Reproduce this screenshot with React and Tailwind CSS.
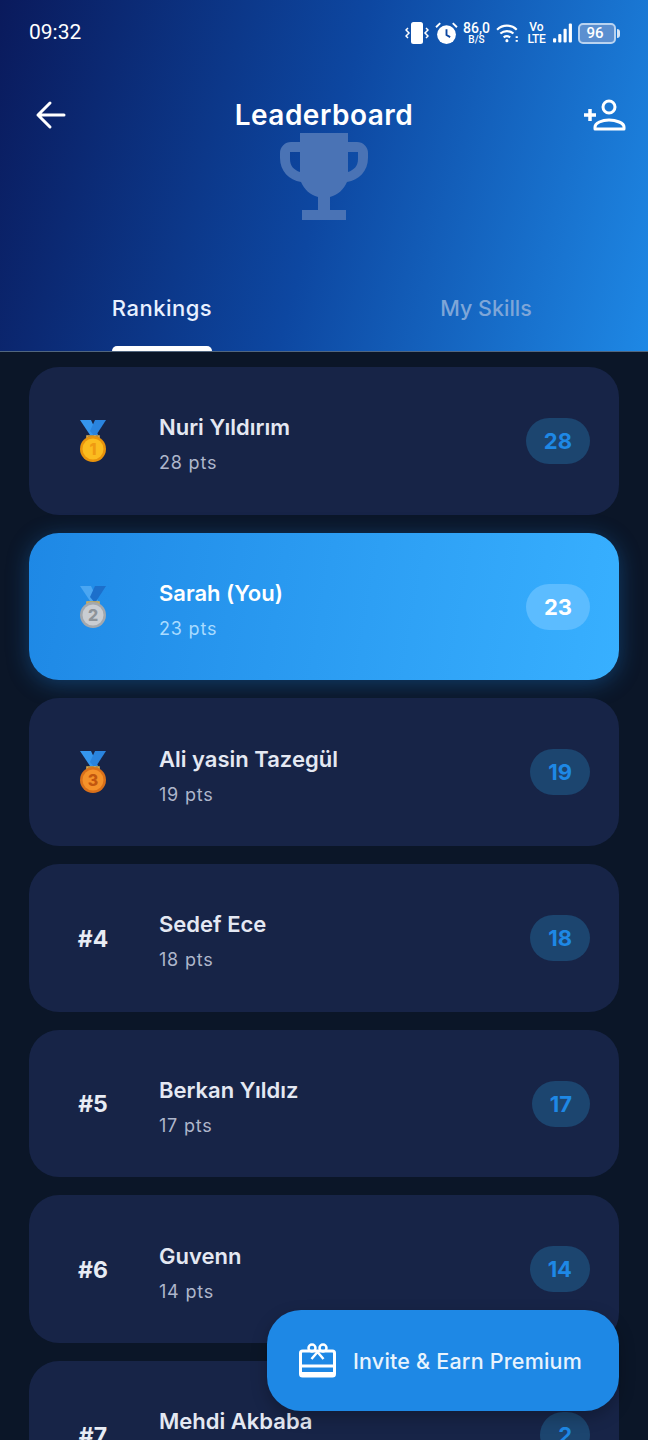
const HEADING = 'font-["Inter",sans-serif]'

const players = [
  { rank: 1, name: 'Nuri Yıldırım', points: 28 },
  { rank: 2, name: 'Sarah (You)', points: 23, isMe: true },
  { rank: 3, name: 'Ali yasin Tazegül', points: 19 },
  { rank: 4, name: 'Sedef Ece', points: 18 },
  { rank: 5, name: 'Berkan Yıldız', points: 17 },
  { rank: 6, name: 'Guvenn', points: 14 },
  { rank: 7, name: 'Mehdi Akbaba', points: 2 }
]

const medals = {
  1: { disk: '#fbbc1f', edge: '#e8930c', mark: '#ef9a12', left: '#3596ee', right: '#2a84de' },
  2: { disk: '#c9cdd2', edge: '#a3a8ae', mark: '#8d9399', left: '#4aa6f2', right: '#1c6fcb' },
  3: { disk: '#f5922a', edge: '#d9701a', mark: '#c2560f', left: '#3596ee', right: '#2a84de' }
}

function Medal({ rank }) {
  const m = medals[rank]
  return (
    <svg width="28" height="44" viewBox="0 0 28 44">
      <path d="M1 1h11l7 15h-8z" fill={m.left} />
      <path d="M27 1h-11l-5 11 5 6z" fill={m.right} />
      <path d="M8 17h12v3l-2 2h-8l-2-2z" fill="none" stroke="#e2b04a" strokeWidth="1.5" />
      <circle cx="14" cy="30" r="13" fill={m.edge} />
      <circle cx="14" cy="30" r="10.5" fill={m.disk} />
      <text x="14" y="36" textAnchor="middle" fontSize="16" fontWeight="800" fontFamily="Inter, sans-serif" fill={m.mark}>
        {rank}
      </text>
    </svg>
  )
}

function PlayerCard({ player }) {
  const { rank, name, points, isMe } = player
  return (
    <div
      className={`flex h-[147.7px] shrink-0 items-center rounded-[30px] pr-[29px] pl-[32px] ${
        isMe
          ? 'bg-[linear-gradient(100deg,#1e88e5,#38b0ff)] shadow-[0_4px_22px_rgba(30,136,229,0.35)]'
          : 'bg-[#172447]'
      }`}
    >
      <div className="flex w-[64px] shrink-0 items-center justify-center">
        {rank <= 3 ? (
          <Medal rank={rank} />
        ) : (
          <span className="pt-[2px] font-['Inter',sans-serif] text-[23px] font-bold text-[#e8ecf4]">#{rank}</span>
        )}
      </div>
      <div className="mt-[7px] ml-[34px] min-w-0 flex-1">
        <div className={`${HEADING} text-[22px] leading-[30px] font-semibold ${isMe ? 'text-white' : 'text-[#e4e8f2]'}`}>
          {name}
        </div>
        <div className={`mt-[8px] font-['Inter',sans-serif] text-[18px] leading-[26px] tracking-[0.8px] ${isMe ? 'text-[#a9dbff]' : 'text-[#aeb6cb]'}`}>
          {points} pts
        </div>
      </div>
      <div
        className={`flex h-[46px] items-center rounded-full px-[18px] pt-[1px] font-['Inter',sans-serif] text-[22px] font-bold ${
          isMe ? 'bg-[#5cbcff] text-white' : 'bg-[#1c456f] text-[#1e88e5]'
        }`}
      >
        {points}
      </div>
    </div>
  )
}

function StatusBar() {
  return (
    <div className="flex h-[66px] items-center justify-between pr-[28px] pl-[29px]">
      <span className="font-['Roboto',sans-serif] text-[21px] text-white">09:32</span>
      <div className="flex items-center text-white">
        <svg width="24" height="24" viewBox="0 0 24 24" fill="none" stroke="white" strokeWidth="1.5">
          <rect x="6" y="1" width="12" height="22" rx="2.5" fill="white" stroke="none" />
          <path d="M3 7l-2 2 3 3-3 3 2 2M21 7l2 2-3 3 3 3-2 2" />
        </svg>
        <svg className="ml-[6px]" width="23" height="23" viewBox="0 0 22 22">
          <circle cx="11" cy="12" r="9" fill="white" />
          <path d="M11 7v5.5l3.5 2" fill="none" stroke="#0d47a1" strokeWidth="1.8" />
          <path d="M1 5l4-4M21 5l-4-4" stroke="white" strokeWidth="1.8" />
        </svg>
        <div className="ml-[5px] flex w-[27px] flex-col items-center font-['Roboto',sans-serif] font-medium">
          <span className="text-[14px] leading-[14px]">86,0</span>
          <span className="text-[10px] leading-[10px]">B/S</span>
        </div>
        <svg className="ml-[6px]" width="24" height="20" viewBox="0 0 22 18" fill="none" stroke="white" strokeWidth="2">
          <path d="M1 6c5-5 13-5 18 0M4 9.5c3.500-3 8.500-3 12 0M7 13c2-1.500 4-1.500 6 0" />
          <circle cx="10" cy="16" r="1.400" fill="white" stroke="none" />
          <path d="M19 12v1.500M19 15.500v1.500" />
        </svg>
        <div className="ml-[6px] flex w-[21px] flex-col items-center font-['Roboto',sans-serif] font-medium">
          <span className="text-[12px] leading-[12px]">Vo</span>
          <span className="text-[12px] leading-[12px] tracking-[-0.3px]">LTE</span>
        </div>
        <svg className="ml-[6px]" width="20" height="22" viewBox="0 0 19 20" fill="white">
          <rect x="0" y="15" width="3" height="4" rx="1" />
          <rect x="5" y="11" width="3" height="8" rx="1" />
          <rect x="10" y="6" width="3" height="13" rx="1" />
          <rect x="15" y="1" width="3" height="18" rx="1" />
        </svg>
        <div className="ml-[5px] flex h-[21px] w-[38px] items-center justify-center rounded-[5px] border-2 border-[#b9d3f0] bg-[#5b8fd0] pr-[4px] font-['Roboto',sans-serif] text-[15px] leading-none font-medium text-white">
          96
        </div>
        <div className="ml-[1px] h-[9px] w-[3px] rounded-r-sm bg-[#d5e4f5]" />
      </div>
    </div>
  )
}

function Header() {
  return (
    <div className="relative h-[352px] shrink-0 border-b border-b-[#51667f] bg-[linear-gradient(105deg,#0a1a5c_0%,#0d47a1_50%,#1e88e5_100%)]">
      <StatusBar />
      <svg className="absolute top-[133px] left-[280px]" width="88" height="87" viewBox="0 0 88 87" fill="#4a73b5">
        <path d="M20 0h48v9h9a11 11 0 0 1 11 11v5c0 13-9 22-21 24-3 7-9 13-17 15v13h16v10H22V77h16V64c-8-2-14-8-17-15C9 47 0 38 0 25v-5A11 11 0 0 1 11 9h9zM10 19v7c0 7 4 11 10 13V19zM68 19v20c6-2 10-6 10-13v-7z" fillRule="evenodd" />
      </svg>
      <div className="relative mt-[18px] flex h-[62px] items-center justify-between pr-[22px] pl-[35px]">
        <svg width="32" height="32" viewBox="0 0 32 32" fill="none" stroke="white" strokeWidth="3" strokeLinecap="round" strokeLinejoin="round">
          <path d="M29 16H3M15 4L3 16l12 12" />
        </svg>
        <h1 className={`${HEADING} absolute top-[13px] left-0 w-full text-center text-[28px] leading-[36px] font-semibold tracking-[0.5px] text-white`}>Leaderboard</h1>
        <svg width="42" height="32" viewBox="0 0 42 32" fill="none" stroke="white" strokeWidth="3">
          <path d="M0 16h12M6 10v12" strokeWidth="3.500" />
          <circle cx="25" cy="8" r="6" />
          <path d="M11 30v-2c0-4 7-7 14-7s15 3 15 7v2z" strokeLinejoin="round" />
        </svg>
      </div>
      <div className="relative mt-[139px] flex h-[46px]">
        <div className="flex w-[324px] items-center justify-center font-['Inter',sans-serif] text-[22px] font-medium tracking-[0.5px] text-[#e8f0ff]">Rankings</div>
        <div className="flex w-[324px] items-center justify-center font-['Inter',sans-serif] text-[21.5px] font-medium text-[#7ea6d8]">My Skills</div>
      </div>
      <div className="absolute bottom-0 left-[112px] h-[5px] w-[100px] rounded-t-[6px] bg-white" />
    </div>
  )
}

export default function App() {
  return (
    <div className="relative h-[1440px] w-[648px] overflow-hidden bg-[#0b1628]">
      <Header />
      <div className="flex flex-col gap-[18px] px-[29px] pt-[15px]">
        {players.map(player => (
          <PlayerCard key={player.rank} player={player} />
        ))}
      </div>
      <button className="absolute top-[1310px] left-[267px] flex h-[101px] w-[352px] items-center rounded-[34px] bg-[#1e88e5] pl-[32px] shadow-[0_6px_16px_rgba(0,0,0,0.25)]">
        <svg width="37" height="35" viewBox="0 0 37 35" fill="none" stroke="white" strokeWidth="3">
          <rect x="1.500" y="8" width="34" height="25" rx="2" />
          <path d="M2 23h33" strokeWidth="3" />
          <path d="M2 31h33" strokeWidth="4" />
          <circle cx="13" cy="5" r="3.500" strokeWidth="2.500" />
          <circle cx="24" cy="5" r="3.500" strokeWidth="2.500" />
          <path d="M18.500 9l-6 7M18.500 9l6 7" strokeWidth="2.500" />
        </svg>
        <span className="ml-[17px] pt-[1px] font-['Inter',sans-serif] text-[21.5px] font-medium tracking-[0.2px] text-[#e8f3fd]">Invite &amp; Earn Premium</span>
      </button>
    </div>
  )
}
